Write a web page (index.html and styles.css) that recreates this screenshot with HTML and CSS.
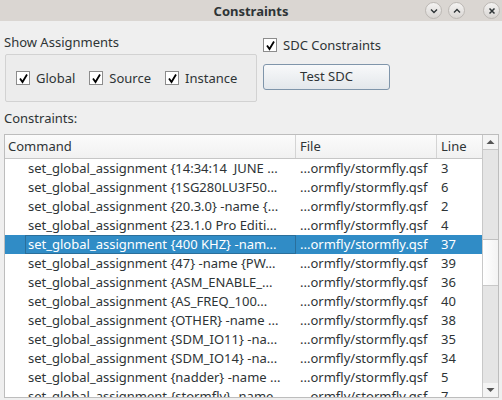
FILE: index.html
```html
<!DOCTYPE html>
<html lang="en">
<head>
    <meta charset="UTF-8">
    <title>Constraints</title>
    <link rel="stylesheet" href="styles.css">
</head>
<body>

<div class="window">

    <!-- Title Bar -->
    <div class="titlebar">
        <span class="title">Constraints</span>
        <div class="win-buttons">
            <span class="win-btn">
                <svg width="12" height="12" viewBox="0 0 12 12"><path d="M3 4.5 L6 7.5 L9 4.5" fill="none" stroke="#2e3436" stroke-width="1.4"/></svg>
            </span>
            <span class="win-btn">
                <svg width="12" height="12" viewBox="0 0 12 12"><path d="M3 7.5 L6 4.5 L9 7.5" fill="none" stroke="#2e3436" stroke-width="1.4"/></svg>
            </span>
            <span class="win-btn close">
                <svg width="12" height="12" viewBox="0 0 12 12"><path d="M3.5 3.5 L8.5 8.5 M8.5 3.5 L3.5 8.5" fill="none" stroke="#2e3436" stroke-width="1.5"/></svg>
            </span>
        </div>
    </div>

    <div class="content">
        <!-- Options -->
        <div class="options">
            <div class="assignments">
                <div class="label">Show Assignments</div>
                <div class="group-box">
                    <label class="check"><span class="box"><svg width="11" height="11" viewBox="0 0 11 11"><path d="M2 5.5 L4.5 9 L9 1.5" fill="none" stroke="#000" stroke-width="1.8"/></svg></span>Global</label>
                    <label class="check"><span class="box"><svg width="11" height="11" viewBox="0 0 11 11"><path d="M2 5.5 L4.5 9 L9 1.5" fill="none" stroke="#000" stroke-width="1.8"/></svg></span>Source</label>
                    <label class="check"><span class="box"><svg width="11" height="11" viewBox="0 0 11 11"><path d="M2 5.5 L4.5 9 L9 1.5" fill="none" stroke="#000" stroke-width="1.8"/></svg></span>Instance</label>
                </div>
            </div>
            <div class="sdc">
                <label class="check"><span class="box"><svg width="11" height="11" viewBox="0 0 11 11"><path d="M2 5.5 L4.5 9 L9 1.5" fill="none" stroke="#000" stroke-width="1.8"/></svg></span>SDC Constraints</label>
                <button class="test-btn">Test SDC</button>
            </div>
        </div>

        <div class="label list-label">Constraints:</div>

        <!-- Constraints Table -->
        <div class="table-frame">
            <div class="table">
                <div class="row header">
                    <div class="cell cmd">Command</div>
                    <div class="cell file">File</div>
                    <div class="cell line">Line</div>
                </div>
                <div class="row"><div class="cell cmd">set_global_assignment {14:34:14&nbsp; JUNE ...</div><div class="cell file">...ormfly/stormfly.qsf</div><div class="cell line">3</div></div>
                <div class="row"><div class="cell cmd">set_global_assignment {1SG280LU3F50...</div><div class="cell file">...ormfly/stormfly.qsf</div><div class="cell line">6</div></div>
                <div class="row"><div class="cell cmd">set_global_assignment {20.3.0} -name {...</div><div class="cell file">...ormfly/stormfly.qsf</div><div class="cell line">2</div></div>
                <div class="row"><div class="cell cmd">set_global_assignment {23.1.0 Pro Editi...</div><div class="cell file">...ormfly/stormfly.qsf</div><div class="cell line">4</div></div>
                <div class="row selected"><div class="cell cmd focus">set_global_assignment {400 KHZ} -nam...</div><div class="cell file">...ormfly/stormfly.qsf</div><div class="cell line">37</div></div>
                <div class="row"><div class="cell cmd">set_global_assignment {47} -name {PW...</div><div class="cell file">...ormfly/stormfly.qsf</div><div class="cell line">39</div></div>
                <div class="row"><div class="cell cmd">set_global_assignment {ASM_ENABLE_...</div><div class="cell file">...ormfly/stormfly.qsf</div><div class="cell line">36</div></div>
                <div class="row"><div class="cell cmd">set_global_assignment {AS_FREQ_100...</div><div class="cell file">...ormfly/stormfly.qsf</div><div class="cell line">40</div></div>
                <div class="row"><div class="cell cmd">set_global_assignment {OTHER} -name ...</div><div class="cell file">...ormfly/stormfly.qsf</div><div class="cell line">38</div></div>
                <div class="row"><div class="cell cmd">set_global_assignment {SDM_IO11} -na...</div><div class="cell file">...ormfly/stormfly.qsf</div><div class="cell line">35</div></div>
                <div class="row"><div class="cell cmd">set_global_assignment {SDM_IO14} -na...</div><div class="cell file">...ormfly/stormfly.qsf</div><div class="cell line">34</div></div>
                <div class="row"><div class="cell cmd">set_global_assignment {nadder} -name ...</div><div class="cell file">...ormfly/stormfly.qsf</div><div class="cell line">5</div></div>
                <div class="row"><div class="cell cmd">set_global_assignment {stormfly} -name ...</div><div class="cell file">...ormfly/stormfly.qsf</div><div class="cell line">7</div></div>
            </div>

            <!-- Scrollbar -->
            <div class="scrollbar">
                <div class="arrow">
                    <svg width="9" height="6" viewBox="0 0 9 6"><path d="M0.5 5 L4.5 1 L8.5 5 Z" fill="#555"/></svg>
                </div>
                <div class="track top"></div>
                <div class="thumb"></div>
                <div class="track"></div>
                <div class="arrow">
                    <svg width="9" height="6" viewBox="0 0 9 6"><path d="M0.5 1 L4.5 5 L8.5 1 Z" fill="#555"/></svg>
                </div>
            </div>
        </div>
    </div>
</div>

</body>
</html>
```

FILE: styles.css
```css
body {
    margin: 0;
    font-family: "Noto Sans", "Open Sans", sans-serif;
    font-size: 13px;
    color: #2e3436;
    background-color: #efefef;
}
.window {
    width: 502px;
    height: 400px;
    overflow: hidden;
}
.titlebar {
    height: 21px;
    background-color: #dad6d2;
    display: flex;
    align-items: center;
    justify-content: center;
    position: relative;
}
.title {
    font-weight: bold;
    font-size: 13px;
}
.win-buttons {
    position: absolute;
    right: 2px;
    top: 2px;
    display: flex;
    gap: 6px;
}
.win-btn {
    width: 15px;
    height: 15px;
    border-radius: 50%;
    border: 1px solid #bcb8b4;
    background: linear-gradient(#f4f3f2, #d9d6d3);
    display: flex;
    align-items: center;
    justify-content: center;
}
.win-btn.close {
    margin-left: 12px;
}
.content {
    padding: 0 3px 0 4px;
}
.options {
    display: flex;
    gap: 6px;
    padding-top: 11px;
}
.label {
    line-height: 20px;
}
.group-box {
    margin-top: 2px;
    margin-left: 1px;
    width: 252px;
    height: 48px;
    border: 1px solid #d2d2d2;
    border-radius: 2px;
    background-color: #ececec;
    display: flex;
    align-items: center;
    padding-left: 10px;
    box-sizing: border-box;
    gap: 14px;
}
.check {
    display: flex;
    align-items: center;
    gap: 6px;
}
.box {
    width: 12px;
    height: 12px;
    border: 1px solid #8c8c8c;
    background-color: #fff;
    display: flex;
    align-items: center;
    justify-content: center;
}
.sdc {
    padding-top: 4px;
    display: flex;
    flex-direction: column;
    gap: 10px;
}
.test-btn {
    width: 127px;
    height: 26px;
    border: 1px solid #7f95aa;
    border-radius: 3px;
    background: linear-gradient(#f8f9fa, #e3e7eb);
    font-family: inherit;
    font-size: 13px;
    color: #2e3436;
    padding: 0;
    padding-bottom: 2px;
}
.list-label {
    margin-top: 6px;
}
.table-frame {
    margin-top: 6px;
    height: 264px;
    border: 1px solid #bdbdbd;
    display: flex;
    box-sizing: border-box;
    background-color: #fff;
}
.table {
    flex: 1;
    overflow: hidden;
}
.row {
    display: flex;
    height: 19px;
    line-height: 19px;
    white-space: nowrap;
}
.cell {
    overflow: hidden;
    box-sizing: border-box;
}
.cmd {
    width: 291px;
    padding-left: 23px;
}
.file {
    width: 141px;
    padding-left: 4px;
}
.line {
    width: 45px;
    padding-left: 4px;
}
.header {
    height: 23px;
    line-height: 22px;
    background: linear-gradient(#fbfbfb, #f1f1f1);
    border-bottom: 1px solid #c6c6c6;
}
.header .cell {
    border-right: 1px solid #d4d4d4;
}
.header .cmd {
    padding-left: 3px;
}
.header .line {
    border-right: none;
}
.selected {
    background-color: #308cc6;
    color: #fff;
}
.focus {
    border: 1px solid #2a6f9b;
    margin-left: 20px;
    width: 271px;
    padding-left: 2px;
    line-height: 17px;
}
.scrollbar {
    width: 16px;
    border-left: 1px solid #c8c8c8;
    background-color: #e5e5e5;
    display: flex;
    flex-direction: column;
    box-sizing: border-box;
}
.arrow {
    height: 14px;
    background-color: #f4f4f4;
    display: flex;
    align-items: center;
    justify-content: center;
}
.track {
    flex: 1;
    border-top: 1px solid #c8c8c8;
}
.track.top {
    flex: none;
    height: 89px;
}
.thumb {
    height: 45px;
    border-top: 1px solid #c0c0c0;
    background: linear-gradient(90deg, #ffffff, #f3f3f3);
}
```
